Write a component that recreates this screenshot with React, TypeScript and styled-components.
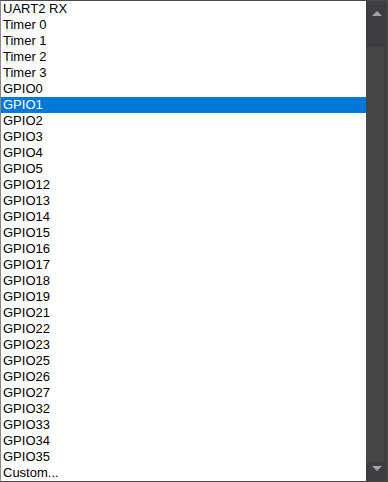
import React from "react";
import styled, { createGlobalStyle } from "styled-components";

const GlobalStyle = createGlobalStyle`
  html, body {
    margin: 0;
    padding: 0;
    background: #ffffff;
  }
`;

const Frame = styled.div`
  display: flex;
  width: 388px;
  height: 482px;
  box-sizing: border-box;
  border: 1px solid #4a4a4a;
  border-left-color: #8a8a8a;
  background: #ffffff;
  overflow: hidden;
`;

const List = styled.ul`
  flex: 1;
  margin: 0;
  padding: 0;
  list-style: none;
  font-family: "Liberation Sans", Arial, sans-serif;
  font-size: 13px;
  color: #000000;
`;

const Item = styled.li<{ $selected?: boolean }>`
  height: 16px;
  line-height: 16px;
  padding-left: 2px;
  white-space: nowrap;
  background: ${(p) => (p.$selected ? "#0078d7" : "transparent")};
  color: ${(p) => (p.$selected ? "#ffffff" : "#000000")};
`;

const ScrollBar = styled.div`
  width: 21px;
  display: flex;
  flex-direction: column;
  background: #3e3d41;
`;

const ArrowButton = styled.div`
  height: 46px;
  display: flex;
  justify-content: center;
  align-items: flex-start;
  padding-top: 10px;
  box-sizing: border-box;

  &:last-child {
    height: 19px;
    padding-top: 4px;
  }
`;

const Thumb = styled.div`
  flex: 1;
  margin: 0 3px 0 0;
  background: #464646;
`;

const Triangle = styled.div<{ $down?: boolean }>`
  width: 0;
  height: 0;
  border-left: 5px solid transparent;
  border-right: 5px solid transparent;
  ${(p) =>
    p.$down
      ? "border-top: 5px solid #a3a3a6;"
      : "border-bottom: 5px solid #a3a3a6;"}
`;

const items = [
  "UART2 RX",
  "Timer 0",
  "Timer 1",
  "Timer 2",
  "Timer 3",
  "GPIO0",
  "GPIO1",
  "GPIO2",
  "GPIO3",
  "GPIO4",
  "GPIO5",
  "GPIO12",
  "GPIO13",
  "GPIO14",
  "GPIO15",
  "GPIO16",
  "GPIO17",
  "GPIO18",
  "GPIO19",
  "GPIO21",
  "GPIO22",
  "GPIO23",
  "GPIO25",
  "GPIO26",
  "GPIO27",
  "GPIO32",
  "GPIO33",
  "GPIO34",
  "GPIO35",
  "Custom...",
];

export default function App() {
  return (
    <>
      <GlobalStyle />
      <Frame>
        <List>
          {items.map((name) => (
            <Item key={name} $selected={name === "GPIO1"}>
              {name}
            </Item>
          ))}
        </List>
        <ScrollBar>
          <ArrowButton>
            <Triangle />
          </ArrowButton>
          <Thumb />
          <ArrowButton>
            <Triangle $down />
          </ArrowButton>
        </ScrollBar>
      </Frame>
    </>
  );
}
